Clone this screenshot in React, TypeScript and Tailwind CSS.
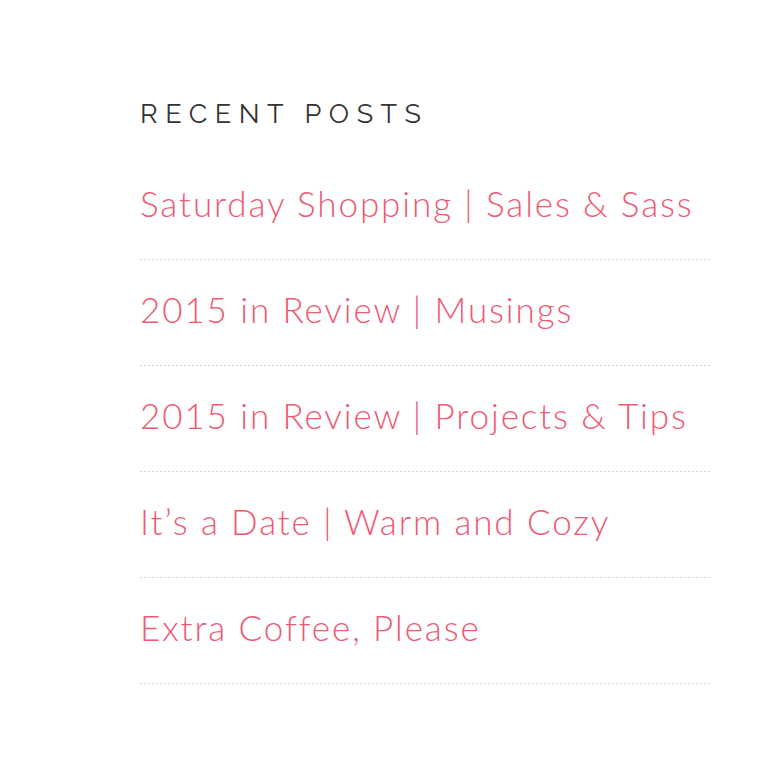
import React from 'react';

const posts = [
  'Saturday Shopping | Sales & Sass',
  '2015 in Review | Musings',
  '2015 in Review | Projects & Tips',
  'It’s a Date | Warm and Cozy',
  'Extra Coffee, Please',
];

const App: React.FC = () => {
  return (
    <div className="min-h-[764px] w-full bg-white">
      <div className="ml-[140px] w-[572px] pt-[97px]">
        {/* Widget title */}
        <h2 className="font-['Raleway','Lato',sans-serif] text-[27px] leading-[34px] font-normal tracking-[7.5px] text-[#333333]">
          RECENT POSTS
        </h2>

        {/* Post list */}
        <ul className="mt-[23px]">
          {posts.map((title) => (
            <li key={title}>
              <a
                href="#"
                className="block pt-[28px] pb-[35px] font-['Lato',sans-serif] font-light text-[35px] leading-[42px] tracking-[1.9px] text-[#ee5a73]"
              >
                {title}
              </a>
              <div className="h-px w-full bg-[repeating-linear-gradient(to_right,#d4d4d4_0px,#d4d4d4_2px,transparent_2px,transparent_4px)]" />
            </li>
          ))}
        </ul>
      </div>
    </div>
  );
};

export default App;
